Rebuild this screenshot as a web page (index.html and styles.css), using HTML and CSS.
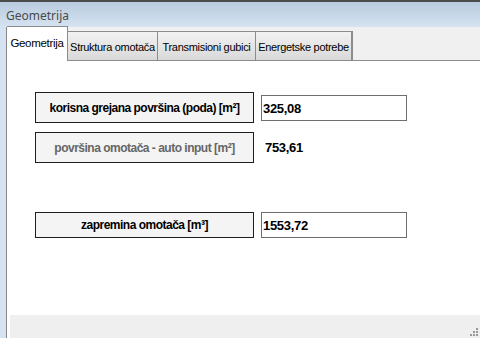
FILE: index.html
```html
<!DOCTYPE html>
<html>
<head>
<meta charset="utf-8">
<link rel="stylesheet" href="styles.css">
</head>
<body>
<div class="window">
  <div class="caption">Geometrija</div>
  <div class="frame">
    <div class="side"></div>
    <div class="panel">
      <div class="tabs">
        <div class="tab active">Geometrija</div>
        <div class="tab t2">Struktura omotača</div>
        <div class="tab t3">Transmisioni gubici</div>
        <div class="tab t4">Energetske potrebe</div>
      </div>
      <div class="content">
        <div class="row r1">
          <div class="label tall">korisna grejana površina (poda) [m²]</div>
          <div class="input">325,08</div>
        </div>
        <div class="row r2">
          <div class="label tall muted">površina omotača - auto input [m²]</div>
          <div class="value">753,61</div>
        </div>
        <div class="row r3">
          <div class="label short">zapremina omotača [m³]</div>
          <div class="input">1553,72</div>
        </div>
      </div>
      <div class="status">
        <svg class="grip" width="10" height="10" viewBox="0 0 10 10">
          <rect x="8" y="2" width="2" height="2" fill="#9a9a9a"/>
          <rect x="5" y="5" width="2" height="2" fill="#9a9a9a"/>
          <rect x="8" y="5" width="2" height="2" fill="#9a9a9a"/>
          <rect x="2" y="8" width="2" height="2" fill="#9a9a9a"/>
          <rect x="5" y="8" width="2" height="2" fill="#9a9a9a"/>
          <rect x="8" y="8" width="2" height="2" fill="#9a9a9a"/>
        </svg>
      </div>
    </div>
  </div>
</div>
</body>
</html>
```
FILE: styles.css
```css
html, body {
  margin: 0;
  padding: 0;
  width: 480px;
  height: 338px;
  overflow: hidden;
  background: #ffffff;
}
.window {
  width: 480px;
  height: 338px;
  display: flex;
  flex-direction: column;
}
.caption {
  height: 25px;
  border-top: 2px solid #4b4b4b;
  background: linear-gradient(#b8cbde, #d6e3f1);
  font-family: "Noto Sans", "DejaVu Sans", sans-serif;
  font-size: 12px;
  color: #4a4a4a;
  padding-left: 6px;
  line-height: 28px;
  box-sizing: content-box;
}
.frame {
  flex: 1;
  display: flex;
}
.side {
  width: 6px;
  background: #d5e2f1;
  border-right: 1px solid #8a8a8a;
}
.panel {
  flex: 1;
  display: flex;
  flex-direction: column;
  background: #ffffff;
}
.tabs {
  height: 33px;
  background: #f0f0f0;
  border-bottom: 1px solid #8c8c8c;
  display: flex;
  align-items: flex-end;
  font-family: "Liberation Sans", Arial, sans-serif;
  font-size: 11px;
  letter-spacing: -0.3px;
  color: #000;
  white-space: nowrap;
}
.tab {
  height: 29px;
  box-sizing: border-box;
  border: 1px solid #8c8c8c;
  border-bottom: none;
  border-left: none;
  background: linear-gradient(#f2f2f2, #d9d9d9);
  display: flex;
  align-items: center;
  justify-content: center;
  padding-top: 2px;
}
.tab.active {
  height: 35px;
  margin-bottom: -1px;
  background: #ffffff;
  width: 61px;
  padding-top: 0;
  padding-bottom: 3px;
  font-size: 11.5px;
}
.t2 { width: 90px; }
.t3 { width: 98px; }
.t4 { width: 97px; border-right: 2px solid #8c8c8c; }
.content {
  flex: 1;
  font-family: "Liberation Sans", Arial, sans-serif;
  font-weight: bold;
  font-size: 12px;
  color: #000;
  display: flex;
  flex-direction: column;
  padding-left: 28px;
}
.row {
  display: flex;
  align-items: center;
  gap: 7px;
}
.r1 { margin-top: 31px; }
.r2 { margin-top: 9px; }
.r3 { margin-top: 49px; }
.label {
  width: 219px;
  box-sizing: border-box;
  border: 1px solid #1e1e1e;
  background: #f4f4f4;
  display: flex;
  align-items: center;
  justify-content: center;
  letter-spacing: -0.5px;
  white-space: nowrap;
}
.label.tall { height: 31px; }
.label.short { height: 26px; }
.label.muted { color: #666666; }
.input {
  width: 146px;
  height: 26px;
  box-sizing: border-box;
  border: 1px solid #6e6e6e;
  background: #fff;
  display: flex;
  align-items: center;
  padding-left: 1px;
  font-size: 13px;
  letter-spacing: -0.3px;
}
.r1 .input { margin-top: 1px; }
.value {
  padding-left: 4px;
  font-size: 13px;
  letter-spacing: -0.3px;
}
.status {
  height: 23px;
  margin-left: 3px;
  background: #efefef;
  display: flex;
  justify-content: flex-end;
  align-items: flex-end;
}
.grip {
  margin: 0 2px 2px 0;
}
```
